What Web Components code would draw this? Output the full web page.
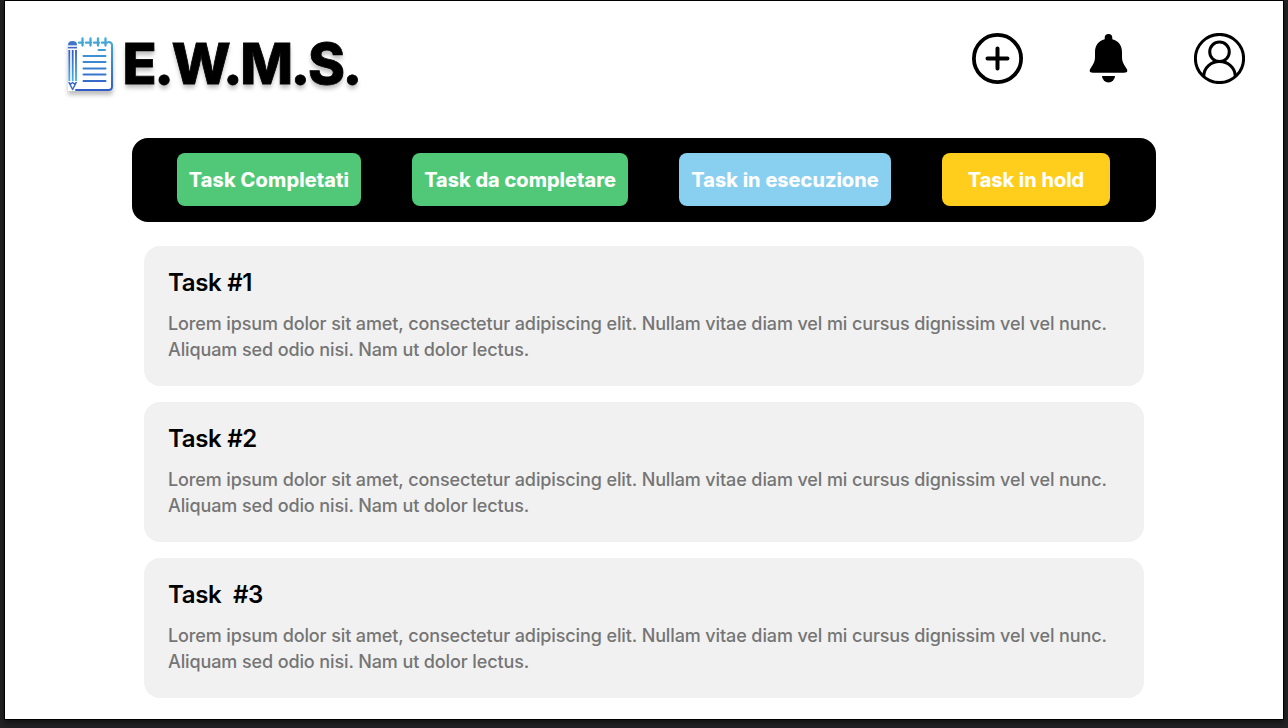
<!DOCTYPE html>
<html lang="it">
<head>
<meta charset="utf-8">
<title>E.W.M.S.</title>
<style>
html, body { margin: 0; height: 100%; }
body { background: #232325; font-family: Inter, "Liberation Sans", sans-serif; overflow: hidden; }
</style>
</head>
<body>
<ewms-app>
  <ewms-header slot="header"></ewms-header>
  <status-bar slot="nav">
    <status-button style="--w:184px;--bg:#50c878;--track:.15px">Task Completati</status-button>
    <status-button style="--w:216px;--bg:#50c878;--track:.05px">Task da completare</status-button>
    <status-button style="--w:212px;--bg:#89cff0;--track:.05px">Task in esecuzione</status-button>
    <status-button style="--w:168px;--bg:#ffcd1b">Task in hold</status-button>
  </status-bar>
  <task-card><span slot="title">Task #1</span>Lorem ipsum dolor sit amet, consectetur adipiscing elit. Nullam vitae diam vel mi cursus dignissim vel vel nunc. Aliquam sed odio nisi. Nam ut dolor lectus.</task-card>
  <task-card><span slot="title">Task #2</span>Lorem ipsum dolor sit amet, consectetur adipiscing elit. Nullam vitae diam vel mi cursus dignissim vel vel nunc. Aliquam sed odio nisi. Nam ut dolor lectus.</task-card>
  <task-card><span slot="title">Task&nbsp; #3</span>Lorem ipsum dolor sit amet, consectetur adipiscing elit. Nullam vitae diam vel mi cursus dignissim vel vel nunc. Aliquam sed odio nisi. Nam ut dolor lectus.</task-card>
</ewms-app>
<script>
function define(name, html) {
  const t = document.createElement('template');
  t.innerHTML = html;
  customElements.define(name, class extends HTMLElement {
    constructor() {
      super();
      this.attachShadow({ mode: 'open' }).append(t.content.cloneNode(true));
    }
  });
}

define('ewms-app', `
<style>
:host { display: block; box-sizing: border-box; height: 728px; padding: 0 4px 8px; }
.page { box-sizing: border-box; height: 720px; background: #fff; border: 1px solid #000; box-shadow: 0 3px 6px rgba(0,0,0,.5); display: flex; flex-direction: column; }
.list { display: flex; flex-direction: column; gap: 16px; width: 1000px; margin: 24px 0 0 139px; }
</style>
<div class="page"><slot name="header"></slot><slot name="nav"></slot><div class="list"><slot></slot></div></div>`);

define('ewms-header', `
<style>
:host { display: flex; justify-content: space-between; box-sizing: border-box; height: 137px; padding: 32px 38px 0 60px; }
.actions { display: flex; gap: 66px; }
svg { display: block; }
</style>
<brand-logo></brand-logo>
<div class="actions">
  <svg width="51" height="51" viewBox="0 0 51 51" fill="none" stroke="#000" stroke-width="4" stroke-linecap="round"><circle cx="25.5" cy="25.5" r="23.6" stroke-width="3.8"/><path d="M25.5 15.5v20M15.5 25.5h20"/></svg>
  <svg width="39" height="51" viewBox="0 0 39 51"><path d="M19.500 1a3.800 3.800 0 0 1 3.800 3.800v1.500C29.500 8 33 12.500 33 19v5c0 5 2 7.500 4.200 11C39.500 38.500 38 39.800 35 39.800H4C1 39.800-.5 38.500 1.800 35 4 31.500 6 29 6 24v-5c0-6.500 3.500-11 9.700-12.700V4.800A3.800 3.800 0 0 1 19.500 1z"/><path d="M13 43h13a6.500 6.500 0 0 1-13 0z"/></svg>
  <svg width="51" height="51" viewBox="0 0 51 51" fill="none" stroke="#000" stroke-width="3"><circle cx="25.500" cy="25.500" r="24.100"/><circle cx="25.500" cy="18.800" r="9.800"/><path d="M9.700 43.200C10 34.500 17 28.600 25.500 28.600S41 34.500 41.300 43.200"/></svg>
</div>`);

define('brand-logo', `
<style>
:host { display: flex; align-items: flex-start; }
svg { display: block; margin-top: 3px; filter: drop-shadow(0 4px 2px rgba(0,0,0,.25)); overflow: visible; }
h1 { margin: -3px 0 0 7.500px; font-size: 56px; line-height: 68px; font-weight: 800; letter-spacing: -2.450px; color: #000; -webkit-text-stroke: .8px #000; text-shadow: 0 4px 4px rgba(0,0,0,.25); }
</style>
<svg width="50" height="58" viewBox="0 0 50 58" fill="none">
  <defs>
    <linearGradient id="g" gradientUnits="userSpaceOnUse" x1="0" y1="0" x2="0" y2="56"><stop offset="0" stop-color="#44b1d8"/><stop offset="1" stop-color="#3159c5"/></linearGradient>
    <linearGradient id="p" gradientUnits="userSpaceOnUse" x1="0" y1="14" x2="0" y2="44"><stop offset="0" stop-color="#3159c5"/><stop offset="1" stop-color="#44b1d8"/></linearGradient>
  </defs>
  <path d="M3 5h41a4 4 0 0 1 4 4v42a4 4 0 0 1-4 4H3z" fill="#fff"/>
  <g stroke="url(#g)" stroke-width="2" stroke-linecap="round">
    <path d="M43.500 6Q47 6 47 9.500v41Q47 54 43.500 54H11"/>
    <path d="M14 6.700h4M21 6.700h5M29 6.700h5M37 6.700h5M17.500 2.500v7M25.500 2.500v7M33 2.500v7M40.500 2.500v7" stroke-width="2.300"/>
    <path d="M33.500 14h6.500M18.500 20h22M18.500 26h22M18.500 32.500h22M18.500 38.500h22M18.500 45h22"/>
  </g>
  <path d="M4.300 14v31M7.700 14v31M11 14v31" stroke="url(#p)" stroke-width="1.800"/>
  <path d="M3 9q0-4 4.500-4T12 9z" fill="#4473cc"/>
  <path d="M3 9.700h9" stroke="#b9c9e8" stroke-width="1.300"/>
  <path d="M3 11.700h9" stroke="#4468c4" stroke-width="1.500"/>
  <path d="M4 46.500l3.600 7 3.600-7-1.800 1.500-1.800-1.500-1.800 1.500z" stroke="#3968ca" stroke-width="1.500" stroke-linejoin="round"/>
</svg>
<h1>E.W.M.S.</h1>`);

define('status-bar', `
<style>
:host { display: flex; flex: none; box-sizing: border-box; width: 1024px; height: 84px; margin-left: 127px; padding: 15px 45px 16px; gap: 51px; border-radius: 16px; background: #000; }
</style><slot></slot>`);

define('status-button', `
<style>
:host { display: block; width: var(--w); }
button { display: flex; align-items: center; justify-content: center; width: 100%; height: 53px; padding: 0; border: 0; border-radius: 8px; background: var(--bg); color: #fff; font: 700 20px/24px Inter, sans-serif; letter-spacing: var(--track, 0); -webkit-text-stroke: .2px #fff; white-space: nowrap; }
</style><button><slot></slot></button>`);

define('task-card', `
<style>
:host { display: block; box-sizing: border-box; height: 140px; padding: 22px 24px 0; border-radius: 16px; background: #f1f1f1; }
h2 { margin: 0 0 13px; font-size: 24px; line-height: 30px; font-weight: 600; letter-spacing: -.32px; color: #000; }
p { margin: 0; font-size: 18px; line-height: 26px; font-weight: 500; letter-spacing: -.113px; color: #757575; }
</style><h2><slot name="title"></slot></h2><p><slot></slot></p>`);
</script>
</body>
</html>
